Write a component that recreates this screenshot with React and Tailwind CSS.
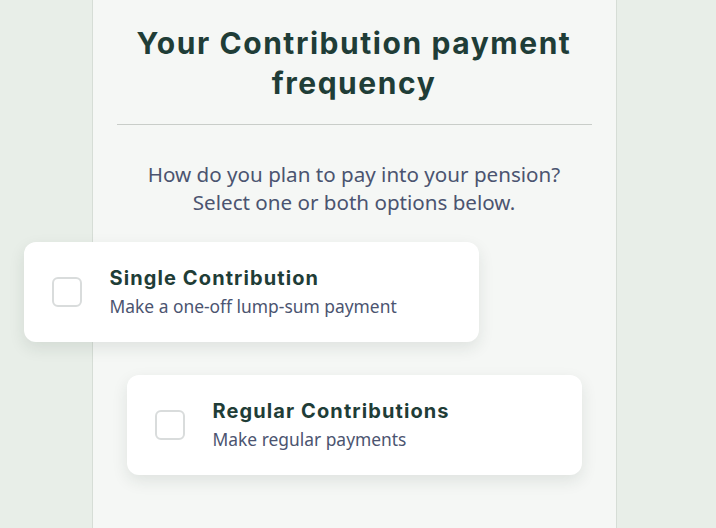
import React, { useState } from 'react';

const options = [
    { id: 'single', title: 'Single Contribution', text: 'Make a one-off lump-sum payment', shift: '-translate-x-[103px]' },
    { id: 'regular', title: 'Regular Contributions', text: 'Make regular payments', shift: '' },
];

const OptionCard = ({ option, checked, onToggle }) => {
    return (
        <div
            className={`flex items-center h-[100px] rounded-xl bg-white pl-[28px] shadow-[0_6px_16px_rgba(30,50,40,0.10)] cursor-pointer ${option.shift}`}
            onClick={onToggle}
        >
            {/* checkbox */}
            <div className={`w-[30px] h-[30px] shrink-0 rounded-[6px] border-2 ${checked ? 'border-[#1f3d37] bg-[#1f3d37]' : 'border-[#d9dcdc] bg-white'}`}></div>
            <div className="ml-[28px] flex flex-col">
                <span className="font-['Inter',sans-serif] font-bold text-[20px] tracking-[0.055em] leading-[28px] text-[#1f3d37]">{option.title}</span>
                <span className="font-['Noto_Sans',sans-serif] text-[17.4px] leading-[28px] text-[#4b5470]">{option.text}</span>
            </div>
        </div>
    );
};

const App = () => {
    const [selected, setSelected] = useState({});

    const toggle = (id) => setSelected((s) => ({ ...s, [id]: !s[id] }));

    return (
        <div className="min-h-screen bg-[#e8eee8] flex justify-center pr-[8px]">
            <div className="w-[525px] min-h-[528px] bg-[#f5f7f5] border-x border-[#d6ddd6] pt-[23px]">
                {/* Heading */}
                <h1 className="text-center font-['Inter',sans-serif] font-bold text-[30px] tracking-[0.052em] leading-[40px] text-[#1f3d37] px-6">
                    Your Contribution payment frequency
                </h1>

                <div className="mx-[24px] mt-[21px] border-t border-[#c9cdc9]"></div>

                <p className="mt-[35px] text-center font-['Noto_Sans',sans-serif] text-[20.6px] leading-[28px] text-[#4b5470]">
                    How do you plan to pay into your pension?
                    <br />
                    Select one or both options below.
                </p>

                {/* Options */}
                <div className="mt-[26px] px-[34px] flex flex-col gap-[33px]">
                    {options.map((option) => (
                        <OptionCard
                            key={option.id}
                            option={option}
                            checked={!!selected[option.id]}
                            onToggle={() => toggle(option.id)}
                        />
                    ))}
                </div>
            </div>
        </div>
    );
};

export default App;
